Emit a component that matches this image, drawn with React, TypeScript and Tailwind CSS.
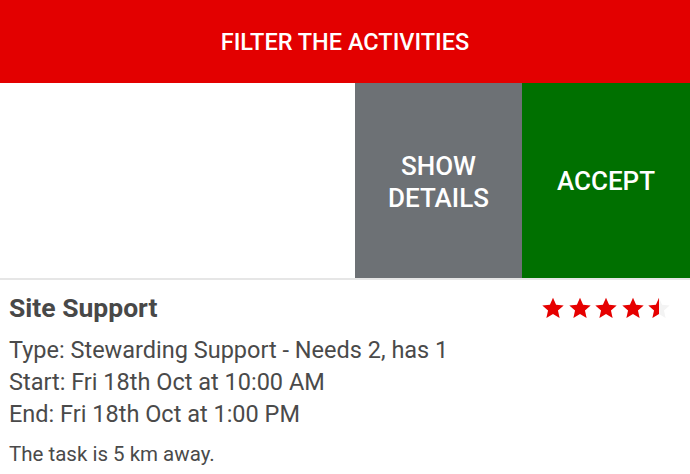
import React from "react";

const STAR = "M12 1.8l3.09 6.96 7.58.72-5.72 5.02 1.68 7.43L12 18.1l-6.63 3.83 1.68-7.43L1.33 9.48l7.58-.72z";

function Star({ fill }: { fill: number }) {
  const id = `clip${Math.round(fill * 100)}`;
  return (
    <svg width="24" height="24" viewBox="0 0 24 24" className="block">
      <defs>
        <clipPath id={id}>
          <rect x="0" y="0" width={24 * fill} height="24" />
        </clipPath>
      </defs>
      <path d={STAR} fill="#f3f3f3" />
      <path d={STAR} fill="#e60000" clipPath={`url(#${id})`} />
    </svg>
  );
}

export default function App() {
  return (
    <div className="w-[690px] h-[474px] bg-white overflow-hidden" style={{ fontFamily: "Roboto, 'Noto Sans', sans-serif" }}>
      <div className="h-[83px] bg-[#e30000] flex items-center justify-center pt-[2px]">
        <span className="text-white text-[23.5px] font-medium uppercase">Filter the activities</span>
      </div>
      <div className="h-[195px] flex">
        <div className="flex-1 bg-white" />
        <div className="w-[167px] bg-[#6d7175] flex items-center justify-center pt-[2px] text-center text-white text-[26px] font-medium leading-[32px]">
          SHOW<br />DETAILS
        </div>
        <div className="w-[168px] bg-[#007000] flex items-center justify-center pt-[2px] text-white text-[26px] font-medium">
          ACCEPT
        </div>
      </div>
      <div className="h-[2px] bg-[#e6e6e6]" />
      <div className="pl-[9px] pr-[19px] pt-[12px] text-[#4a4a4a]">
        <div className="flex items-center justify-between">
          <div className="text-[26.5px] font-bold leading-[32px] text-[#484848]">Site Support</div>
          <div className="flex gap-[2.5px]">
            <Star fill={1} />
            <Star fill={1} />
            <Star fill={1} />
            <Star fill={1} />
            <Star fill={0.5} />
          </div>
        </div>
        <div className="mt-[10px] text-[23.5px] leading-[32px]">
          <div>Type: Stewarding Support - Needs 2, has 1</div>
          <div>Start: Fri 18th Oct at 10:00 AM</div>
          <div>End: Fri 18th Oct at 1:00 PM</div>
        </div>
        <div className="mt-[10px] text-[20.5px] leading-[28px]">The task is 5 km away.</div>
      </div>
    </div>
  );
}
